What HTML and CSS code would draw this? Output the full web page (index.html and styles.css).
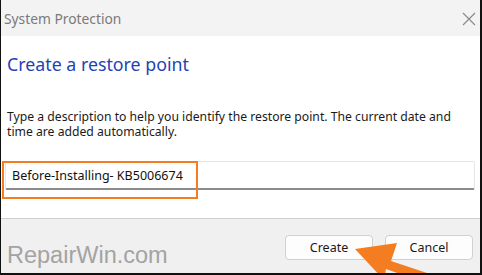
FILE: index.html
```html
<!DOCTYPE html>
<html lang="en">

<head>
    <meta charset="UTF-8">
    <title>System Protection</title>
    <link rel="stylesheet" href="styles.css">
</head>

<body>
    <div class="window">
        <div class="titlebar">
            <span class="title">System Protection</span>
            <svg class="close" width="14" height="14" viewBox="0 0 14 14">
                <path d="M1 1 L13 13 M13 1 L1 13" stroke="#8a8a8a" stroke-width="1.2" fill="none" />
            </svg>
        </div>
        <div class="content">
            <h1>Create a restore point</h1>
            <p>Type a description to help you identify the restore point. The current date and time are added automatically.</p>
            <div class="field">
                <input type="text" class="text-input" value="Before-Installing- KB5006674">
                <div class="highlight"></div>
            </div>
        </div>
        <div class="footer">
            <span class="watermark">RepairWin.com</span>
            <button class="btn">Create</button>
            <button class="btn">Cancel</button>
        </div>
        <!-- orange pointer arrow -->
        <svg class="arrow" width="100" height="40" viewBox="0 0 100 40">
            <polygon points="2,9 44,3 38,21 80,35 76,40 64,40 33,29 31,40" fill="#f47d22" />
        </svg>
    </div>
</body>

</html>
```

FILE: styles.css
```css
* {
    box-sizing: border-box;
}

body {
    margin: 0;
    font-family: "Noto Sans", sans-serif;
    background: #000;
}

.window {
    position: relative;
    width: 482px;
    height: 275px;
    display: flex;
    flex-direction: column;
    border-left: 1px solid #111;
    border-right: 2px solid #111;
    border-bottom: 2px solid #111;
    background: #fff;
    overflow: hidden;
}

.titlebar {
    height: 36px;
    flex-shrink: 0;
    display: flex;
    align-items: center;
    justify-content: space-between;
    padding: 0 4px 0 3px;
    background: #f3f3f3;
}

.title {
    font-size: 13.8px;
    color: #7a7a7a;
}

.close {
    margin-top: 1px;
}

.content {
    flex: 1;
    padding: 16px 6px 0 6px;
    background: #fff;
}

h1 {
    margin: 0 0 33px 0;
    font-size: 17.8px;
    font-weight: normal;
    color: #1f43b4;
}

p {
    margin: 0 0 22px 0;
    font-size: 12.2px;
    line-height: 15px;
    color: #1a1a1a;
}

.field {
    position: relative;
}

.text-input {
    display: block;
    width: 470px;
    height: 29px;
    margin-left: -2px;
    padding: 0 6px;
    border: 1px solid #e6e6e6;
    border-bottom: 2px solid #8c8c8c;
    border-radius: 2px;
    font-family: "Noto Sans", sans-serif;
    font-size: 12.5px;
    color: #111;
    background: #fff;
}

.highlight {
    position: absolute;
    left: -5px;
    top: 0;
    width: 196px;
    height: 38px;
    border: 2px solid #f47d22;
}

.footer {
    height: 55px;
    flex-shrink: 0;
    display: flex;
    align-items: flex-start;
    gap: 12px;
    padding: 16px 7px 0 6px;
    background: #f0f0f0;
    border-top: 1px solid #cfcfcf;
}

.watermark {
    margin-right: auto;
    margin-top: 7px;
    font-family: "Liberation Sans", Arial, sans-serif;
    font-size: 23.5px;
    color: #a3a3a3;
}

.btn {
    width: 88px;
    height: 25px;
    border: 1px solid #d0d0d0;
    border-radius: 4px;
    background: #fdfdfd;
    font-family: "Noto Sans", sans-serif;
    font-size: 12.5px;
    color: #1a1a1a;
    padding: 0;
}

.arrow {
    position: absolute;
    left: 352px;
    top: 240px;
}
```
